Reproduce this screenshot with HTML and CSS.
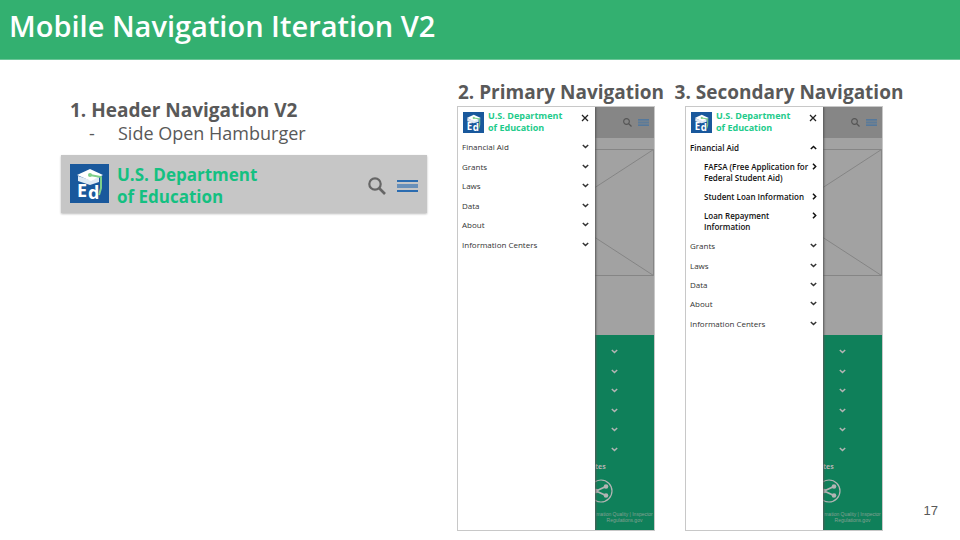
FILE: index.html
```html
<!DOCTYPE html>
<html lang="en">
<head>
<meta charset="utf-8">
<meta name="viewport" content="width=device-width, initial-scale=1">
<title>Mobile Navigation Iteration V2</title>
<link rel="stylesheet" href="styles.css">
</head>
<body>
<svg class="defs" aria-hidden="true">
  <symbol id="logo-cap" viewBox="0 0 39 39">
    <path d="M8 12 20 16 29 13V18L20 21 8 17Z" fill="#dfeaf4"/>
    <path d="M20 5 33 11 21 17 7 11Z" fill="#fff"/>
    <path d="M20 11 31 13V24L29 31" fill="none" stroke="#7ed08a" stroke-width="2"/>
    <circle cx="20" cy="11" r="2" fill="#7ed08a"/>
  </symbol>
  <symbol id="search" viewBox="0 0 18 18">
    <circle cx="7" cy="7" r="5.7" fill="none" stroke="currentColor" stroke-width="2.2"/>
    <path d="M11 11 17 17" stroke="currentColor" stroke-width="2.6"/>
  </symbol>
  <symbol id="menu" viewBox="0 0 21 12">
    <path d="M0 4H21V8H0Z" fill="currentColor" opacity=".6"/>
    <path d="M0 1H21M0 11H21" stroke="currentColor" stroke-width="2"/>
  </symbol>
  <symbol id="chevron" viewBox="0 0 6 4">
    <path d="M.7 .7 3 2.9 5.3 .7" fill="none" stroke="currentColor" stroke-width="1.3"/>
  </symbol>
  <symbol id="chevron-up" viewBox="0 0 6 4">
    <path d="M.7 3.3 3 1.1 5.3 3.3" fill="none" stroke="currentColor" stroke-width="1.3"/>
  </symbol>
  <symbol id="chevron-right" viewBox="0 0 4 6">
    <path d="M.7 .7 3 3 .7 5.3" fill="none" stroke="currentColor" stroke-width="1.3"/>
  </symbol>
  <symbol id="close" viewBox="0 0 8 8">
    <path d="M1 1 7 7M7 1 1 7" stroke="currentColor" stroke-width="1.3"/>
  </symbol>
  <symbol id="share" viewBox="0 0 24 24">
    <circle cx="12" cy="12" r="11" fill="none" stroke="currentColor" stroke-width="1.2"/>
    <path d="M17 7.500 7 12 17 16.500" fill="none" stroke="currentColor" stroke-width="1.8"/>
    <circle cx="17" cy="7.500" r="2.300" fill="currentColor"/>
    <circle cx="7" cy="12" r="2.300" fill="currentColor"/>
    <circle cx="17" cy="16.500" r="2.300" fill="currentColor"/>
  </symbol>
</svg>

<header class="title-bar"><h1>Mobile Navigation Iteration V2</h1></header>

<main class="board">
  <section class="intro">
    <h2>1. Header Navigation V2</h2>
    <ul class="notes"><li>Side Open Hamburger</li></ul>
    <div class="site-header">
      <a class="brand" href="#"><svg class="brand-logo" viewBox="0 0 39 39"><text x="7" y="33">E</text><text x="18" y="35">d</text><use href="#logo-cap"/></svg><span>U.S. Department<br>of Education</span></a>
      <button class="icon-btn search" aria-label="Search"><svg><use href="#search"/></svg></button>
      <button class="icon-btn menu" aria-label="Open menu"><svg><use href="#menu"/></svg></button>
    </div>
  </section>

  <section class="example">
    <h2>2. Primary Navigation</h2>
    <div class="phone">
      <nav class="drawer" aria-label="Primary">
        <div class="drawer-head">
          <a class="brand small" href="#"><svg class="brand-logo" viewBox="0 0 39 39"><text x="7" y="33">E</text><text x="18" y="35">d</text><use href="#logo-cap"/></svg><span>U.S. Department<br>of Education</span></a>
          <button class="icon-btn close" aria-label="Close menu"><svg><use href="#close"/></svg></button>
        </div>
        <ul class="nav-list six">
          <li><button class="row">Financial Aid<svg><use href="#chevron"/></svg></button></li>
          <li><button class="row">Grants<svg><use href="#chevron"/></svg></button></li>
          <li><button class="row">Laws<svg><use href="#chevron"/></svg></button></li>
          <li><button class="row">Data<svg><use href="#chevron"/></svg></button></li>
          <li><button class="row">About<svg><use href="#chevron"/></svg></button></li>
          <li><button class="row">Information Centers<svg><use href="#chevron"/></svg></button></li>
        </ul>
      </nav>
      <div class="page">
        <div class="page-head">
          <button class="icon-btn search" aria-label="Search"><svg><use href="#search"/></svg></button>
          <button class="icon-btn menu" aria-label="Open menu"><svg><use href="#menu"/></svg></button>
        </div>
        <svg class="hero" viewBox="0 0 59 127" preserveAspectRatio="none"><path d="M0 .5H58.500V126.500H0M0 38.500 58.500 .5M0 88.500 58.500 126.500"/></svg>
        <div class="footer">
          <div class="folds">
            <svg><use href="#chevron"/></svg>
            <svg><use href="#chevron"/></svg>
            <svg><use href="#chevron"/></svg>
            <svg><use href="#chevron"/></svg>
            <svg><use href="#chevron"/></svg>
            <svg><use href="#chevron"/></svg>
          </div>
          <strong>tes</strong>
          <svg class="share"><use href="#share"/></svg>
          <p>mation Quality | Inspector<br>Regulations.gov</p>
        </div>
      </div>
    </div>
  </section>

  <section class="example">
    <h2>3. Secondary Navigation</h2>
    <div class="phone">
      <nav class="drawer" aria-label="Secondary">
        <div class="drawer-head">
          <a class="brand small" href="#"><svg class="brand-logo" viewBox="0 0 39 39"><text x="7" y="33">E</text><text x="18" y="35">d</text><use href="#logo-cap"/></svg><span>U.S. Department<br>of Education</span></a>
          <button class="icon-btn close" aria-label="Close menu"><svg><use href="#close"/></svg></button>
        </div>
        <ul class="nav-list">
          <li><button class="row open" aria-expanded="true">Financial Aid<svg><use href="#chevron-up"/></svg></button>
            <ul class="sub-list">
              <li><a href="#">FAFSA (Free Application for<br>Federal Student Aid)<svg><use href="#chevron-right"/></svg></a></li>
              <li><a href="#">Student Loan Information<svg><use href="#chevron-right"/></svg></a></li>
              <li><a href="#">Loan Repayment<br>Information<svg><use href="#chevron-right"/></svg></a></li>
            </ul>
          </li>
        </ul>
        <ul class="nav-list five">
          <li><button class="row">Grants<svg><use href="#chevron"/></svg></button></li>
          <li><button class="row">Laws<svg><use href="#chevron"/></svg></button></li>
          <li><button class="row">Data<svg><use href="#chevron"/></svg></button></li>
          <li><button class="row">About<svg><use href="#chevron"/></svg></button></li>
          <li><button class="row">Information Centers<svg><use href="#chevron"/></svg></button></li>
        </ul>
      </nav>
      <div class="page">
        <div class="page-head">
          <button class="icon-btn search" aria-label="Search"><svg><use href="#search"/></svg></button>
          <button class="icon-btn menu" aria-label="Open menu"><svg><use href="#menu"/></svg></button>
        </div>
        <svg class="hero" viewBox="0 0 59 127" preserveAspectRatio="none"><path d="M0 .5H58.500V126.500H0M0 38.500 58.500 .5M0 88.500 58.500 126.500"/></svg>
        <div class="footer">
          <div class="folds">
            <svg><use href="#chevron"/></svg>
            <svg><use href="#chevron"/></svg>
            <svg><use href="#chevron"/></svg>
            <svg><use href="#chevron"/></svg>
            <svg><use href="#chevron"/></svg>
            <svg><use href="#chevron"/></svg>
          </div>
          <strong>tes</strong>
          <svg class="share"><use href="#share"/></svg>
          <p>mation Quality | Inspector<br>Regulations.gov</p>
        </div>
      </div>
    </div>
  </section>
</main>
<span class="page-number">17</span>
</body>
</html>
```
FILE: styles.css
```css
* { box-sizing: border-box; }

body {
  margin: 0;
  min-height: 100vh;
  position: relative;
  background: #fff;
  color: #595959;
  font-family: "Open Sans", "Noto Sans", sans-serif;
}

h1, h2, p, ul { margin: 0; padding: 0; }
ul { list-style: none; }
svg { display: block; flex: none; }
a { color: inherit; text-decoration: none; }
button { padding: 0; border: 0; background: none; color: inherit; font: inherit; cursor: pointer; }
.defs { position: absolute; width: 0; height: 0; }

.title-bar { padding: 8px 9px 16px; background: #33b070; border-bottom: 1px solid #6cc598; }
.title-bar h1 { color: #fff; font-size: 29px; line-height: 35px; font-weight: 600; }

.board {
  display: grid;
  grid-template-columns: minmax(0, 366fr) minmax(0, 198fr) minmax(0, 198fr);
  column-gap: 30px;
  padding: 20px 77px 8px 61px;
}

h2 { font-size: 19px; line-height: 24px; font-weight: 700; white-space: nowrap; }

.intro { padding-top: 18px; }
.intro h2 { padding-left: 9px; }
.notes { padding-left: 28px; font-size: 18px; line-height: 22px; }
.notes li { display: flex; }
.notes li::before { content: "-"; width: 29px; }

.site-header {
  display: flex;
  align-items: center;
  margin-top: 11px;
  padding: 9px 9px 5px;
  background: #c6c6c6;
  box-shadow: 0 1px 2px #bbb;
}
.brand {
  display: flex;
  align-items: flex-start;
  gap: 8px;
  margin-right: auto;
  color: #14c081;
  font-size: 17px;
  line-height: 22px;
  font-weight: 700;
  white-space: nowrap;
}
.brand-logo { width: 39px; height: 39px; background: #19589c; }
.brand-logo text { fill: #fff; font-size: 18px; font-weight: 700; }
.icon-btn svg { width: 100%; height: 100%; }
.search { width: 18px; height: 18px; color: #666; }
.menu { width: 21px; height: 12px; margin-left: 11px; color: #2b6cb0; }

.example { display: flex; flex-direction: column; align-items: center; }
.example h2 { padding-left: 10px; }
.phone {
  display: flex;
  width: 100%;
  margin-top: 2px;
  border: 1px solid #c8c8c8;
  overflow: hidden;
}
.drawer {
  flex: 137 1 0;
  min-width: 0;
  z-index: 1;
  background: #fff;
  color: #333;
  font-size: 8px;
  box-shadow: 1px 0 2px #555;
}
.drawer-head { display: flex; align-items: flex-start; padding: 3px 6px 3px 5px; }
.brand.small { align-items: center; gap: 4px; color: #1ecb8b; font-size: 9px; line-height: 12px; }
.brand.small .brand-logo { width: 21px; height: 21px; }
.close { width: 8px; height: 8px; margin-top: 4px; color: #222; }

.nav-list { padding: 0 6px 0 4px; }
.nav-list.six { display: grid; grid-auto-rows: 1fr; height: 117px; }
.nav-list.five { display: grid; grid-auto-rows: 1fr; height: 97px; }
.row {
  display: flex;
  align-items: center;
  justify-content: space-between;
  width: 100%;
  height: 100%;
  text-align: left;
}
.row svg { width: 7px; height: 5px; }
.row.open { height: 20px; color: #111; font-weight: 600; }
.sub-list { padding-left: 14px; font-weight: 600; color: #111; line-height: 11px; }
.sub-list a { display: flex; justify-content: space-between; padding: 4px 0; white-space: nowrap; }
.sub-list svg { width: 5px; height: 7px; margin-top: 2px; }

.page { flex: 59 1 0; min-width: 0; background: #a2a2a2; overflow: hidden; }
.page-head { display: flex; align-items: center; justify-content: flex-end; height: 31px; padding-right: 5px; background: #868686; }
.page-head .search { width: 9px; height: 9px; color: #555; }
.page-head .menu { width: 11px; height: 7px; margin-left: 6px; color: #4474a4; }
.hero { width: 100%; height: 127px; margin: 11px 0 59px; }
.hero path { fill: none; stroke: #858585; }

.footer {
  display: flex;
  flex-direction: column;
  height: 195px;
  padding-top: 7px;
  background: #0f805a;
  color: #b4b4b4;
}
.folds { display: grid; grid-auto-rows: 1fr; align-items: center; height: 117px; padding-left: 16px; }
.folds svg { width: 7px; height: 5px; }
.footer strong { margin-top: 3px; font-size: 7px; line-height: 10px; }
.share { width: 24px; height: 24px; margin: 7px 0 8px -6px; }
.footer p {
  font-family: "Liberation Sans", sans-serif;
  font-size: 5px;
  line-height: 6px;
  text-align: center;
  white-space: nowrap;
  color: #84a093;
}

.page-number {
  position: absolute;
  right: 22px;
  bottom: 22px;
  font-family: "Liberation Sans", sans-serif;
  font-size: 13px;
  line-height: 15px;
}
```
